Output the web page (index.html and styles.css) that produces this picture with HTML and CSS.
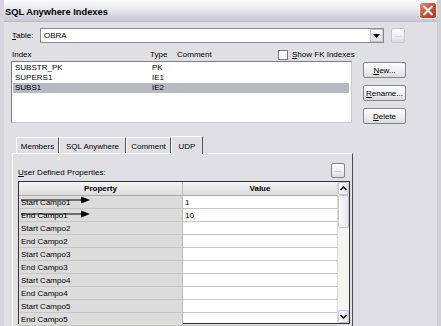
FILE: index.html
```html
<!doctype html>
<html lang="en">
  <head>
    <meta charset="UTF-8" />
    <title>SQL Anywhere Indexes</title>
    <link rel="stylesheet" href="styles.css">
  </head>
  <body>
    <div class="window">
      <div class="titlebar">
        <span class="title">SQL Anywhere Indexes</span>
        <span class="close">
          <svg width="18" height="17" viewBox="0 0 18 17">
            <path d="M5 4.5 L13 12.5 M13 4.5 L5 12.5" stroke="#fff" stroke-width="2" stroke-linecap="round" />
          </svg>
        </span>
      </div>

      <div class="client">
        <div class="table-row">
          <span class="lbl"><u>T</u>able:</span>
          <div class="combo">
            <span class="combo-text">OBRA</span>
            <span class="drop">
              <svg width="7" height="4" viewBox="0 0 7 4"><path d="M0 0 H7 L3.5 4 Z" fill="#000" /></svg>
            </span>
          </div>
          <span class="btn tiny disabled">...</span>
        </div>

        <div class="list-head">
          <span class="col-index">Index</span>
          <span class="col-type">Type</span>
          <span class="col-comment">Comment</span>
          <span class="check"><span class="box"></span><u>S</u>how FK Indexes</span>
        </div>

        <div class="list-area">
          <div class="listbox">
            <div class="item"><span class="c-name">SUBSTR_PK</span><span>PK</span></div>
            <div class="item"><span class="c-name">SUPERS1</span><span>IE1</span></div>
            <div class="item selected"><span class="c-name">SUBS1</span><span>IE2</span></div>
          </div>
          <div class="buttons">
            <span class="btn"><u>N</u>ew...</span>
            <span class="btn"><u>R</u>ename...</span>
            <span class="btn"><u>D</u>elete</span>
          </div>
        </div>

        <div class="tabs">
          <span class="tab t-members">Members</span>
          <span class="tab t-sql">SQL Anywhere</span>
          <span class="tab t-comment">Comment</span>
          <span class="tab t-udp active">UDP</span>
        </div>

        <div class="panel">
          <div class="udp-head">
            <span><u>U</u>ser Defined Properties:</span>
            <span class="btn tiny">...</span>
          </div>
          <div class="grid">
            <div class="grid-table">
              <div class="grow head">
                <span class="cell prop">Property</span>
                <span class="cell val">Value</span>
              </div>
              <div class="grow"><span class="cell prop">Start Campo1</span><span class="cell val">1</span></div>
              <div class="grow"><span class="cell prop">End Campo1</span><span class="cell val">10</span></div>
              <div class="grow"><span class="cell prop">Start Campo2</span><span class="cell val"></span></div>
              <div class="grow"><span class="cell prop">End Campo2</span><span class="cell val"></span></div>
              <div class="grow"><span class="cell prop">Start Campo3</span><span class="cell val"></span></div>
              <div class="grow"><span class="cell prop">End Campo3</span><span class="cell val"></span></div>
              <div class="grow"><span class="cell prop">Start Campo4</span><span class="cell val"></span></div>
              <div class="grow"><span class="cell prop">End Campo4</span><span class="cell val"></span></div>
              <div class="grow"><span class="cell prop">Start Campo5</span><span class="cell val"></span></div>
              <div class="grow"><span class="cell prop">End Campo5</span><span class="cell val"></span></div>
            </div>
            <div class="vscroll">
              <span class="sbtn">
                <svg width="7" height="5" viewBox="0 0 7 5"><path d="M0.5 4 L3.5 1 L6.5 4" fill="none" stroke="#222" stroke-width="1.6" /></svg>
              </span>
              <span class="thumb"></span>
              <span class="track"></span>
              <span class="sbtn">
                <svg width="7" height="5" viewBox="0 0 7 5"><path d="M0.5 1 L3.5 4 L6.5 1" fill="none" stroke="#222" stroke-width="1.6" /></svg>
              </span>
            </div>
          </div>
        </div>
      </div>

      <svg class="arrows" width="100" height="30" viewBox="0 0 100 30">
        <line x1="21" y1="5" x2="84" y2="5" stroke="#000" stroke-width="1.2" />
        <polygon points="81,1.5 90,5 81,8.5" fill="#000" />
        <line x1="21" y1="19" x2="84" y2="19" stroke="#000" stroke-width="1.2" />
        <polygon points="81,15.5 90,19 81,22.5" fill="#000" />
      </svg>
    </div>
  </body>
</html>
```

FILE: styles.css
```css
body {
  margin: 0;
  font-family: "Liberation Sans", Arial, sans-serif;
  font-size: 8px;
  color: #000;
}
.window {
  position: relative;
  width: 441px;
  height: 326px;
  overflow: hidden;
  background-color: #e0dfe3;
  box-sizing: border-box;
  border-left: 4px solid #d6d5dd;
  border-right: 4px solid #d0cfd8;
}
.titlebar {
  height: 22px;
  margin: 0 -4px;
  display: flex;
  align-items: center;
  justify-content: space-between;
  padding: 0 4px 0 5px;
  background: linear-gradient(#fbfbfd, #e9e9ef 45%, #d4d3dd 80%, #c8c7d3);
  border-bottom: 1px solid #bcbbc8;
  box-sizing: border-box;
}
.title {
  font-weight: bold;
  font-size: 9.3px;
  padding-top: 2px;
}
.close {
  width: 18px;
  height: 17px;
  border-radius: 3px;
  border: 1px solid #fff;
  box-sizing: border-box;
  background: linear-gradient(135deg, #e88a78, #d3462a 55%, #c23418);
  display: flex;
  align-items: center;
  justify-content: center;
}
.close svg {
  flex: none;
}
.client {
  padding: 6px 0 0 8px;
}
.table-row {
  display: flex;
  align-items: center;
  height: 15px;
}
.lbl {
  width: 28px;
}
.combo {
  width: 344px;
  height: 15px;
  box-sizing: border-box;
  border: 1px solid #8a8a96;
  background: #fff;
  display: flex;
  align-items: center;
  justify-content: space-between;
  padding-left: 3px;
}
.drop {
  width: 13px;
  height: 13px;
  box-sizing: border-box;
  background: linear-gradient(#fafafa, #dcdce2);
  border: 1px solid #c4c4cc;
  display: flex;
  align-items: center;
  justify-content: center;
}
.btn {
  display: flex;
  align-items: center;
  justify-content: center;
  box-sizing: border-box;
  height: 16px;
  border: 1px solid #85858f;
  border-radius: 2px;
  background: linear-gradient(#fdfdfd, #ebebee 70%, #d8d8de);
}
.btn.tiny {
  width: 14px;
  height: 15px;
  font-size: 7px;
  padding-bottom: 2px;
  color: #666;
}
.table-row .btn.tiny {
  margin-left: 7px;
}
.btn.disabled {
  color: #aaa;
  border-color: #c5c5cc;
}
.list-head {
  display: flex;
  align-items: center;
  height: 13px;
  margin-top: 5px;
}
.col-index {
  width: 138px;
}
.col-type {
  width: 27px;
}
.col-comment {
  width: 101px;
}
.check {
  display: flex;
  align-items: center;
}
.box {
  width: 10px;
  height: 10px;
  box-sizing: border-box;
  border: 1px solid #7a7a84;
  background: #fafafa;
  margin-right: 4px;
}
.list-area {
  display: flex;
  align-items: flex-start;
  height: 63px;
}
.listbox {
  margin-left: -1px;
  width: 341px;
  height: 62px;
  box-sizing: border-box;
  border: 1px solid #7d7d88;
  border-right-color: #c8c8d0;
  border-bottom-color: #c8c8d0;
  background: #fff;
  padding: 1px 2px 0 1px;
}
.item {
  display: flex;
  height: 10px;
  line-height: 10px;
  padding-left: 2px;
}
.item.selected {
  background: #b9b8c5;
}
.c-name {
  width: 137px;
}
.buttons {
  margin-left: 11px;
  margin-top: 1px;
  display: flex;
  flex-direction: column;
  gap: 7px;
}
.buttons .btn {
  width: 43px;
}
.tabs {
  display: flex;
  align-items: flex-end;
  height: 17px;
  margin-top: 12px;
  padding-left: 4px;
}
.tab {
  height: 16px;
  box-sizing: border-box;
  display: flex;
  align-items: center;
  justify-content: center;
  border-top: 1px solid #fff;
  border-left: 1px solid #fff;
  border-right: 1px solid #555;
  padding-top: 1px;
}
.t-members { width: 43px; }
.t-sql { width: 67px; }
.t-comment { width: 45px; }
.t-udp { width: 32px; }
.tab.active {
  height: 18px;
  margin-bottom: -1px;
  background: #e0dfe3;
  position: relative;
}
.panel {
  width: 341px;
  height: 190px;
  box-sizing: border-box;
  border-top: 1px solid #fff;
  border-left: 1px solid #fff;
  border-right: 1px solid #4a4a4a;
  padding: 8px 2px 0 5px;
}
.udp-head {
  display: flex;
  align-items: flex-end;
  justify-content: space-between;
  height: 16px;
  padding-right: 5px;
}
.udp-head span:first-child {
  padding-bottom: 1px;
}
.grid {
  margin-top: 3px;
  width: 332px;
  height: 143px;
  box-sizing: border-box;
  border: 1px solid #333;
  display: flex;
  background: #fff;
}
.grid-table {
  width: 318px;
}
.grow {
  display: flex;
  height: 13px;
}
.grow.head {
  height: 14px;
  font-weight: bold;
}
.cell {
  box-sizing: border-box;
  height: 100%;
  display: flex;
  align-items: center;
  border-bottom: 1px solid #c6c6c2;
  padding-left: 2px;
}
.prop {
  width: 164px;
  background: #dcdcdc;
  border-right: 1px solid #b9b9b9;
}
.val {
  width: 154px;
}
.head .cell {
  justify-content: center;
  padding-left: 0;
  background: linear-gradient(#f4f4f4, #dddddd);
  border-bottom: 1px solid #a9a9a9;
}
.vscroll {
  width: 12px;
  display: flex;
  flex-direction: column;
  background: #f4f4f2;
  border-left: 1px solid #d8d8d8;
}
.sbtn {
  height: 13px;
  box-sizing: border-box;
  border: 1px solid #c8c8d4;
  border-radius: 2px;
  background: linear-gradient(90deg, #fdfdff, #e2e2ec);
  display: flex;
  align-items: center;
  justify-content: center;
}
.thumb {
  height: 33px;
  box-sizing: border-box;
  border: 1px solid #c8c8d4;
  border-radius: 2px;
  background: linear-gradient(90deg, #fbfbfd, #e6e6ee);
}
.track {
  flex: 1;
}
.arrows {
  position: absolute;
  left: -4px;
  top: 195px;
}
```
